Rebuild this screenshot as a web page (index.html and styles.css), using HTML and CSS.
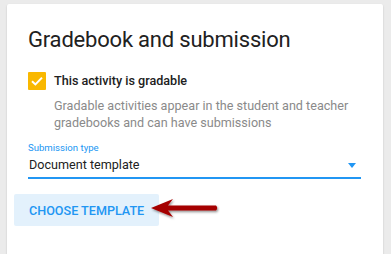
FILE: index.html
```html
<!DOCTYPE html>
<html>
<head>
<meta charset="utf-8">
<link rel="stylesheet" href="styles.css">
</head>
<body>
<div class="card">
  <h1 class="title">Gradebook and submission</h1>
  <div class="check-row">
    <span class="checkbox">
      <svg width="18" height="18" viewBox="0 0 18 18"><path d="M4 9.2 L7.4 12.4 L14 5.6" fill="none" stroke="#fff" stroke-width="2"/></svg>
    </span>
    <div class="check-text">
      <div class="check-label">This activity is gradable</div>
      <div class="check-desc">Gradable activities appear in the student and teacher<br>gradebooks and can have submissions</div>
    </div>
  </div>
  <div class="field">
    <div class="field-label">Submission type</div>
    <div class="field-input">
      <span>Document template</span>
      <span class="caret"></span>
    </div>
  </div>
  <div class="btn-row">
    <button class="btn">CHOOSE TEMPLATE</button>
    <svg class="annot-arrow" width="76" height="26" viewBox="0 0 76 26">
      <defs>
        <filter id="sh" x="-20%" y="-40%" width="140%" height="180%">
          <feDropShadow dx="1" dy="1.5" stdDeviation="1.2" flood-color="#000" flood-opacity="0.45"/>
        </filter>
      </defs>
      <path d="M2 11 L24 2 L19 8.5 L67 8.5 Q69.5 11 67 13.5 L19 13.5 L24 20 Z" fill="#a50000" filter="url(#sh)"/>
    </svg>
  </div>
</div>
</body>
</html>
```
FILE: styles.css
```css
html, body {
  margin: 0;
  padding: 0;
}
body {
  background: #ebebeb;
  font-family: Roboto, "Liberation Sans", sans-serif;
  padding: 4px 8px 0 7px;
  height: 254px;
  box-sizing: border-box;
  overflow: hidden;
}
.card {
  position: relative;
  background: #fff;
  height: 270px;
  padding: 22px 21px 0 21px;
  box-sizing: border-box;
  box-shadow: 0 1px 2px rgba(0,0,0,0.18);
  border-radius: 2px;
}
.title {
  margin: 0;
  font-size: 22px;
  line-height: 28px;
  font-weight: 400;
  letter-spacing: -0.2px;
  color: #212121;
}
.check-row {
  display: flex;
  gap: 8px;
  margin-top: 18px;
}
.checkbox {
  flex: 0 0 18px;
  width: 18px;
  height: 18px;
  background: #f9b800;
  border-radius: 1px;
  display: block;
}
.checkbox svg {
  display: block;
}
.check-label {
  font-size: 12.6px;
  line-height: 18px;
  font-weight: 500;
  color: #212121;
}
.check-desc {
  margin-top: 7px;
  font-size: 12.6px;
  line-height: 17px;
  color: #8a8a8a;
  white-space: nowrap;
}
.field {
  margin-top: 11px;
  width: 333px;
}
.field-label {
  font-size: 9.6px;
  line-height: 12px;
  color: #2196f3;
}
.field-input {
  display: flex;
  justify-content: space-between;
  align-items: center;
  font-size: 12.6px;
  line-height: 18px;
  color: #212121;
  padding: 2px 0 3px 1px;
  border-bottom: 2px solid #2196f3;
}
.caret {
  width: 0;
  height: 0;
  border-left: 4.5px solid transparent;
  border-right: 4.5px solid transparent;
  border-top: 5px solid #2196f3;
  margin-right: 5px;
}
.btn-row {
  position: relative;
  margin-top: 15px;
  margin-left: -14px;
}
.btn {
  display: block;
  font-family: Roboto, "Liberation Sans", sans-serif;
  font-size: 12.6px;
  font-weight: 500;
  color: #2196f3;
  background: #e3f1fc;
  border: none;
  border-radius: 2px;
  height: 32px;
  width: 145px;
  padding: 0 0 0 15px;
  text-align: left;
}
.annot-arrow {
  position: absolute;
  left: 135px;
  top: 3px;
}
```
